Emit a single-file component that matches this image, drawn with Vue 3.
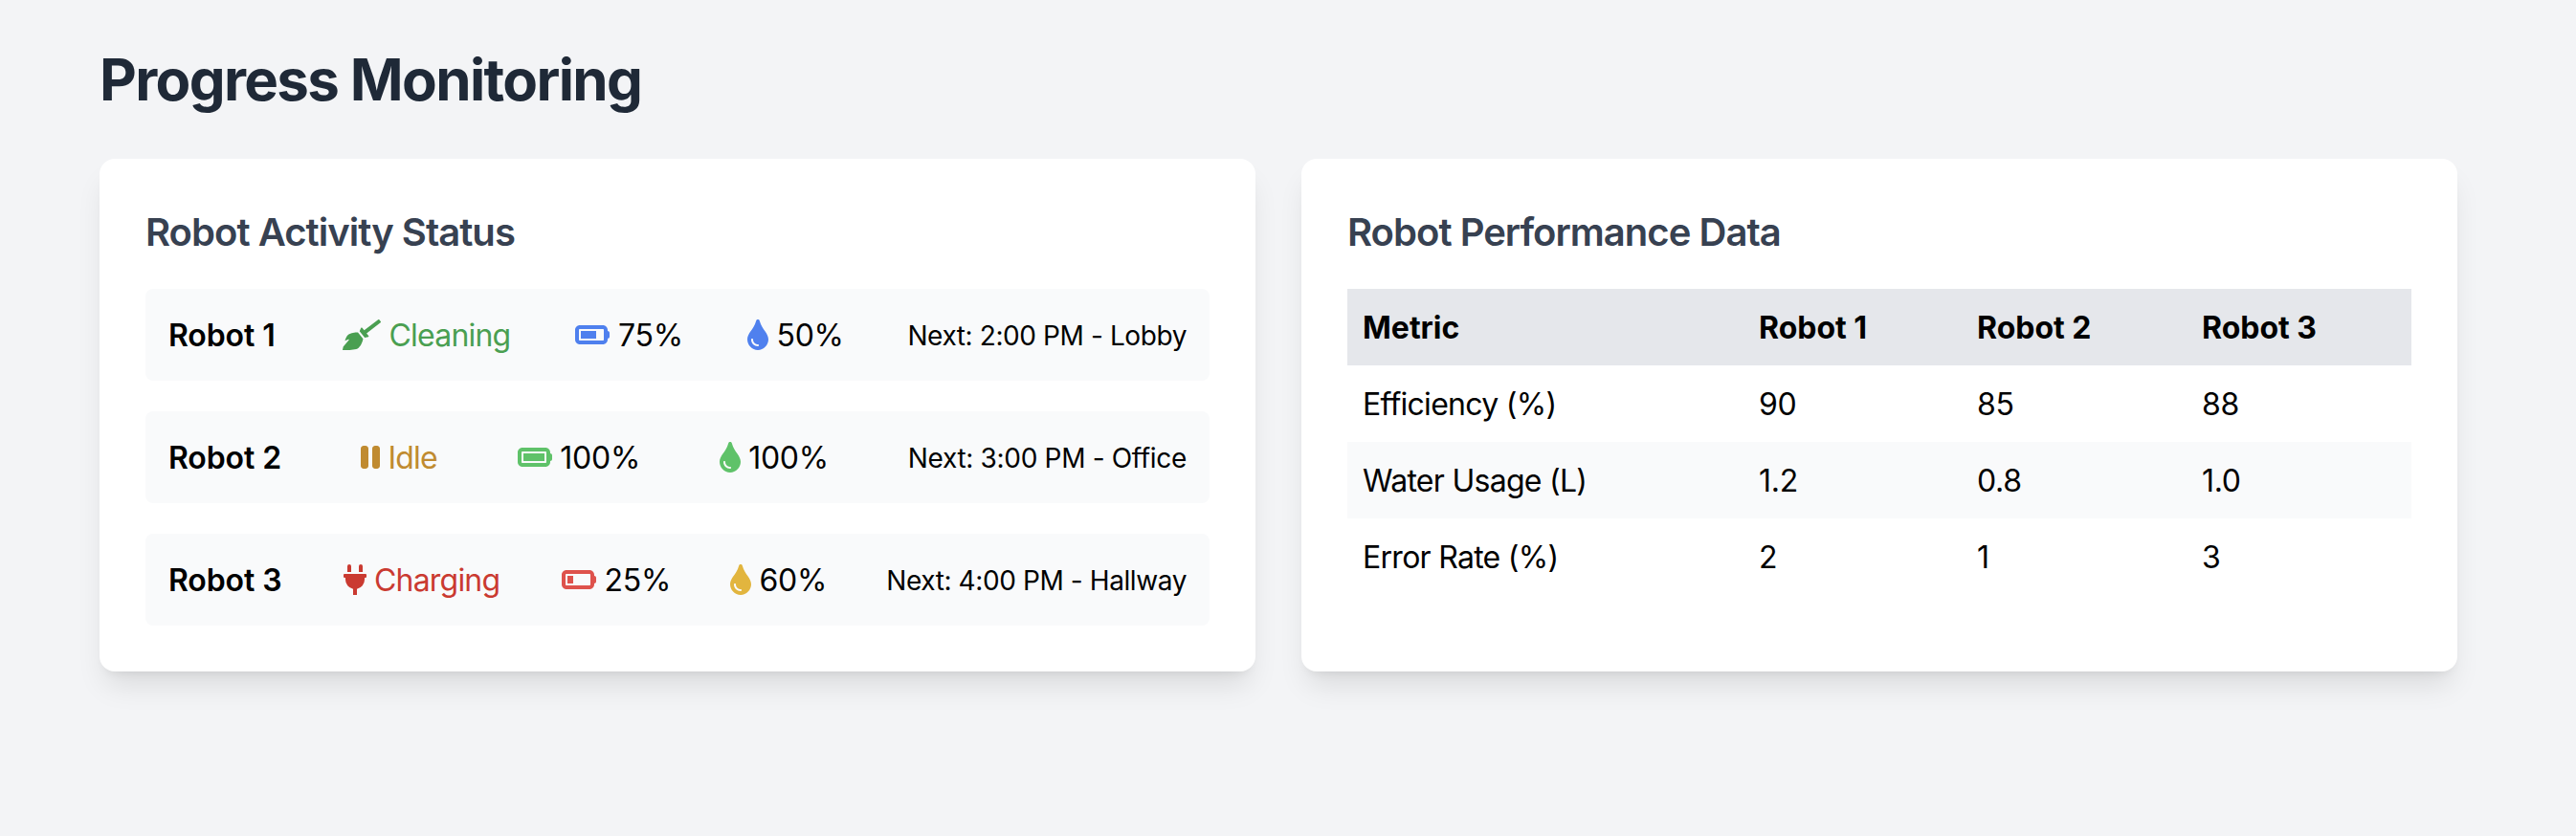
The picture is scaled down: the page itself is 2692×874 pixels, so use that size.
<script setup>
const broom = {
  w: 640,
  d: 'M256.47 216.77l86.73 109.18s-16.6 102.36-76.57 150.12C206.66 523.85 0 510.19 0 510.19s3.8-23.14 11-55.43l94.62-112.17c3.97-4.7-.87-11.62-6.65-9.5l-60.4 22.09c14.44-41.66 32.72-80.04 54.6-97.47 59.97-47.76 163.3-40.94 163.3-40.94zM636.53 31.03l-19.86-25c-5.49-6.9-15.52-8.05-22.41-2.56l-232.48 177.8-34.14-42.97c-5.09-6.41-15.14-5.21-18.59 2.21l-25.33 54.55 86.73 109.18 58.8-12.45c8-1.69 11.42-11.2 6.34-17.6l-34.09-42.92 232.48-177.8c6.89-5.48 8.04-15.53 2.55-22.44z'
}
const pause = {
  w: 320,
  d: 'M48 64C21.5 64 0 85.5 0 112V400c0 26.5 21.5 48 48 48H80c26.5 0 48-21.5 48-48V112c0-26.5-21.5-48-48-48H48zm192 0c-26.5 0-48 21.5-48 48V400c0 26.5 21.5 48 48 48h32c26.5 0 48-21.5 48-48V112c0-26.5-21.5-48-48-48H240z'
}
const plug = {
  w: 384,
  d: 'M320 32a32 32 0 0 0-64 0v96h64Zm48 128H16A16 16 0 0 0 0 176v32a16 16 0 0 0 16 16H32v32A160.07 160.07 0 0 0 160 412.8V512h64V412.8A160.07 160.07 0 0 0 352 256V224h16a16 16 0 0 0 16-16V176A16 16 0 0 0 368 160ZM128 32a32 32 0 0 0-64 0v96h64Z'
}
const drop = {
  w: 352,
  d: 'M205.22 22.09c-7.94-28.78-49.44-30.12-58.44 0C100.01 179.85 0 222.72 0 333.91 0 432.35 78.72 512 176 512s176-79.65 176-178.09c0-111.75-99.79-153.34-146.78-311.82zM176 448c-61.75 0-112-50.25-112-112 0-8.84 7.16-16 16-16s16 7.16 16 16c0 44.11 35.89 80 80 80 8.84 0 16 7.16 16 16s-7.16 16-16 16z'
}
const battery = (level) => ({
  w: 576,
  d: `M464 160c8.8 0 16 7.2 16 16V336c0 8.8-7.2 16-16 16H80c-8.8 0-16-7.2-16-16V176c0-8.8 7.2-16 16-16H464zM80 96C35.8 96 0 131.8 0 176V336c0 44.2 35.8 80 80 80H464c44.2 0 80-35.8 80-80V320c17.7 0 32-14.3 32-32V224c0-17.7-14.3-32-32-32V176c0-44.2-35.8-80-80-80H80zM${level} 192H96V320H${level}V192z`
})

const robots = [
  { name: 'Robot 1', state: 'cleaning', tone: 'green', icon: broom, status: 'Cleaning', battery: '75%', cell: battery(352), cellTone: 'blue-light', water: '50%', waterTone: 'blue-light', next: 'Next: 2:00 PM - Lobby' },
  { name: 'Robot 2', state: 'idle', tone: 'yellow', icon: pause, status: 'Idle', battery: '100%', cell: battery(448), cellTone: 'green-light', water: '100%', waterTone: 'green-light', next: 'Next: 3:00 PM - Office' },
  { name: 'Robot 3', state: 'charging', tone: 'red', icon: plug, status: 'Charging', battery: '25%', cell: battery(192), cellTone: 'red-light', water: '60%', waterTone: 'yellow-light', next: 'Next: 4:00 PM - Hallway' }
]

const metrics = [
  ['Efficiency (%)', '90', '85', '88'],
  ['Water Usage (L)', '1.2', '0.8', '1.0'],
  ['Error Rate (%)', '2', '1', '3']
]
</script>

<template>
  <main class="page">
    <h1>Progress Monitoring</h1>
    <div class="grid">
      <section class="card">
        <h2>Robot Activity Status</h2>
        <div class="list">
          <div v-for="r in robots" :key="r.name" class="row" :class="r.state">
            <span class="name">{{ r.name }}</span>
            <span class="item" :class="r.tone">
              <svg class="icon" :viewBox="`0 0 ${r.icon.w} 512`" :width="r.icon.w / 16" height="32"><path :d="r.icon.d" /></svg>
              <span class="status">{{ r.status }}</span>
            </span>
            <span class="item">
              <svg class="icon" :class="r.cellTone" :viewBox="`0 0 ${r.cell.w} 512`" width="36" height="32"><path fill-rule="evenodd" :d="r.cell.d" /></svg>
              <span class="pct">{{ r.battery }}</span>
            </span>
            <span class="item">
              <svg class="icon" :class="r.waterTone" :viewBox="`0 0 ${drop.w} 512`" width="22" height="32"><path :d="drop.d" /></svg>
              <span class="pct">{{ r.water }}</span>
            </span>
            <span class="next">{{ r.next }}</span>
          </div>
        </div>
      </section>
      <section class="card">
        <h2>Robot Performance Data</h2>
        <table>
          <colgroup><col class="c1" /><col class="c2" /><col class="c3" /><col /></colgroup>
          <thead>
            <tr><th>Metric</th><th>Robot 1</th><th>Robot 2</th><th>Robot 3</th></tr>
          </thead>
          <tbody>
            <tr v-for="m in metrics" :key="m[0]">
              <td v-for="(v, i) in m" :key="i">{{ v }}</td>
            </tr>
          </tbody>
        </table>
      </section>
    </div>
  </main>
</template>

<style>
html, body { background: #f3f4f6; }
</style>

<style scoped>
.page {
  box-sizing: border-box;
  min-height: 874px;
  padding: 47px 124px 0 104px;
  background: #f3f4f6;
  color: #000;
  font-family: Inter, "Liberation Sans", sans-serif;
  font-size: 32px;
  line-height: 48px;
}
h1 {
  margin: 0 0 47px;
  color: #1f2937;
  font-size: 60px;
  font-weight: 700;
  line-height: 72px;
  letter-spacing: -1.65px;
}
.grid {
  display: grid;
  grid-template-columns: 1fr 1fr;
  gap: 48px;
}
.card {
  padding: 48px;
  border-radius: 16px;
  background: #fff;
  box-shadow: 0 20px 30px -6px rgba(0, 0, 0, 0.1), 0 8px 12px -8px rgba(0, 0, 0, 0.1);
}
h2 {
  margin: 0 0 32px;
  padding-top: 2px;
  color: #374151;
  font-size: 40px;
  font-weight: 600;
  line-height: 54px;
  letter-spacing: -0.97px;
}
.list {
  display: flex;
  flex-direction: column;
  gap: 32px;
}
.row {
  display: grid;
  align-items: center;
  justify-content: space-between;
  height: 96px;
  padding: 0 24px;
  box-sizing: border-box;
  border-radius: 8px;
  background: #f9fafb;
  white-space: nowrap;
}
.cleaning { grid-template-columns: 114px 175.3px 111.5px 98px 293px; }
.idle { grid-template-columns: 117px 80px 127px 111.5px 293px; }
.charging { grid-template-columns: 117px 163px 110.5px 97.5px 314px; }
.name, .status, .pct { padding-top: 2px; }
.name { font-weight: 600; letter-spacing: -0.1px; }
.item { display: flex; align-items: center; gap: 8.5px; }
.status { letter-spacing: -0.8px; }
.pct { letter-spacing: -0.25px; }
.icon { display: block; flex: none; fill: currentColor; }
.next {
  padding-top: 1px;
  font-size: 28px;
  line-height: 40px;
  letter-spacing: -0.4px;
  text-align: right;
}
.idle .next { letter-spacing: -0.32px; }
.green { color: #4a9f51; }
.yellow { color: #c08b30; }
.red { color: #ca3a31; }
.blue-light { color: #4f80ee; }
.green-light { color: #5fc269; }
.red-light { color: #de524c; }
.yellow-light { color: #e2b53e; }
table {
  width: 100%;
  border-collapse: collapse;
  table-layout: fixed;
  text-align: left;
}
.c1 { width: 414px; }
.c2 { width: 228px; }
.c3 { width: 235px; }
th, td { height: 48px; padding: 17px 16px 15px; }
td { letter-spacing: -0.3px; }
td:first-child { letter-spacing: -0.72px; }
th { font-weight: 700; background: #e5e7eb; }
tbody tr:nth-child(even) { background: #f9fafb; }
</style>
